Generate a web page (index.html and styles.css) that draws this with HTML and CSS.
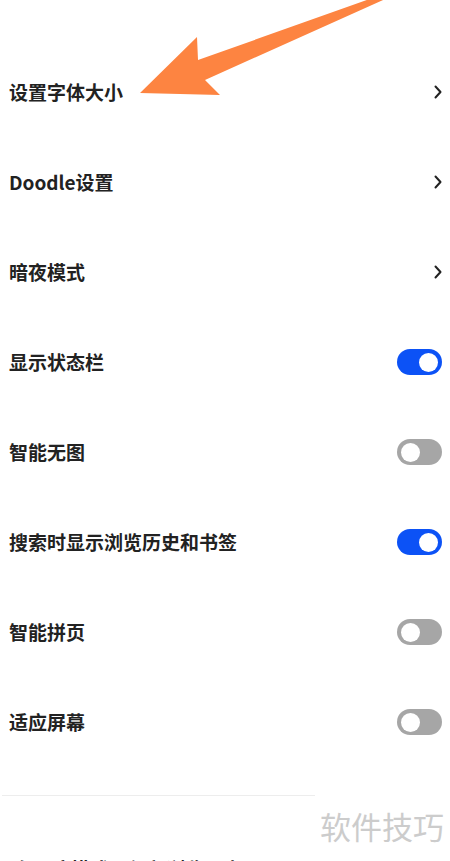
FILE: index.html
```html
<!DOCTYPE html>
<html>
<head>
	<title>设置</title>
	<meta charset="utf-8">
	<link rel="stylesheet" href="styles.css">
</head>
<body>
	<div id="page">
		<div class="list">
			<div class="row">
				<span class="label">设置字体大小</span>
				<svg class="chev" width="8" height="14" viewBox="0 0 8 14"><path d="M1.5 1.5 L6.5 7 L1.5 12.5" /></svg>
			</div>
			<div class="row">
				<span class="label">Doodle设置</span>
				<svg class="chev" width="8" height="14" viewBox="0 0 8 14"><path d="M1.5 1.5 L6.5 7 L1.5 12.5" /></svg>
			</div>
			<div class="row">
				<span class="label">暗夜模式</span>
				<svg class="chev" width="8" height="14" viewBox="0 0 8 14"><path d="M1.5 1.5 L6.5 7 L1.5 12.5" /></svg>
			</div>
			<div class="row">
				<span class="label">显示状态栏</span>
				<span class="switch on"><span class="knob"></span></span>
			</div>
			<div class="row">
				<span class="label">智能无图</span>
				<span class="switch"><span class="knob"></span></span>
			</div>
			<div class="row">
				<span class="label">搜索时显示浏览历史和书签</span>
				<span class="switch on"><span class="knob"></span></span>
			</div>
			<div class="row">
				<span class="label">智能拼页</span>
				<span class="switch"><span class="knob"></span></span>
			</div>
			<div class="row">
				<span class="label">适应屏幕</span>
				<span class="switch"><span class="knob"></span></span>
			</div>
		</div>

		<div class="divider"></div>

		<div class="next">
			<span class="label">在无痕模式下保留浏览历史</span>
		</div>

		<div class="watermark">软件技巧</div>

		<svg class="arrow" width="450" height="120" viewBox="0 0 450 120">
			<polygon points="140,93 197,37 198,60 378,-4 392,-4 205,80 220,95" />
		</svg>
	</div>
</body>
</html>
```

FILE: styles.css
```css
body { padding:0; margin:0; background: #FFFFFF; }
#page { position: relative; width: 450px; height: 861px; overflow: hidden; font-family: "Noto Sans CJK SC", "Noto Sans", sans-serif; color: #222222; }

.list { padding-top: 47px; }
.row { height: 90px; display: flex; align-items: center; justify-content: space-between; padding: 0 8px 0 9px; }
.label { font-size: 19px; font-weight: bold; line-height: 24px; }

.chev { margin-right: 0; }
.chev path { fill: none; stroke: #222222; stroke-width: 2; stroke-linecap: round; stroke-linejoin: round; }

/* toggle switches */
.switch { width: 45px; height: 26px; border-radius: 13px; background: #A6A6A6; display: flex; align-items: center; padding: 0 4px; box-sizing: border-box; }
.switch .knob { width: 19px; height: 19px; border-radius: 50%; background: #FFFFFF; }
.switch.on { background: #0C52F6; justify-content: flex-end; }

.divider { margin: 28px 0 0 2px; width: 313px; height: 1px; background: #EDEDED; }
.next { padding: 61px 0 0 14px; }

.watermark { position: absolute; left: 320px; top: 806px; font-size: 31px; color: #CCCCCC; line-height: 40px; }
.arrow { position: absolute; left: 0; top: 0; }
.arrow polygon { fill: #FD8441; }
```
